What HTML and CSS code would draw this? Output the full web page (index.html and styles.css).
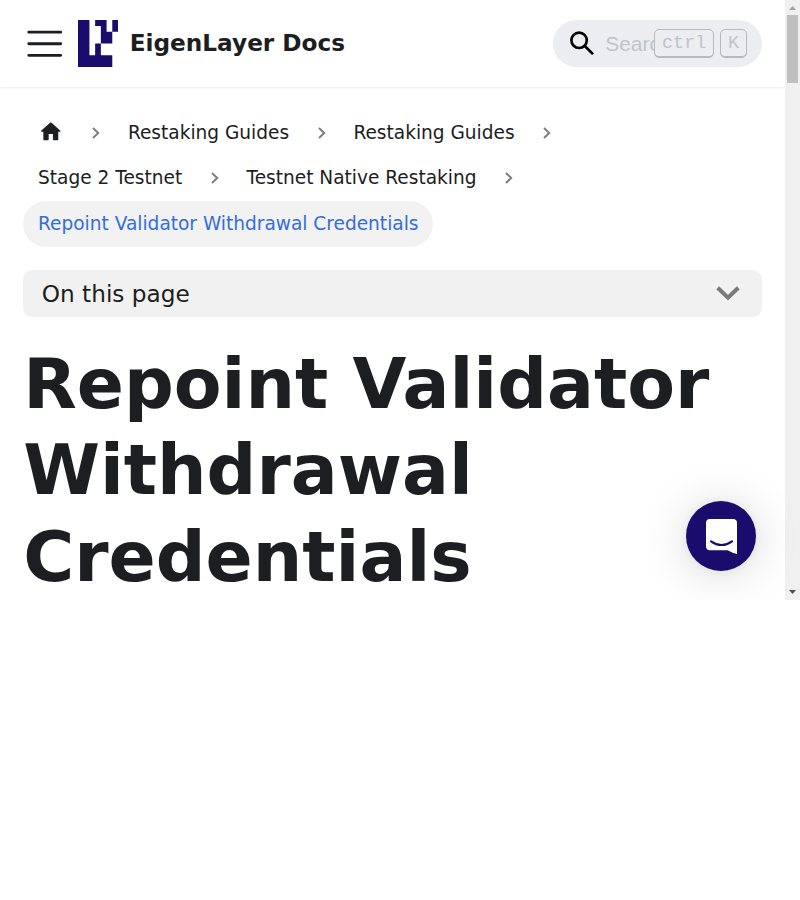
FILE: index.html
```
<!DOCTYPE html>
<html lang="en">
<head>
<meta charset="utf-8">
<title>Repoint Validator Withdrawal Credentials | EigenLayer Docs</title>
<link rel="stylesheet" href="styles.css">
</head>
<body>
<div class="viewport">
  <div class="page">
    <header class="navbar">
      <svg class="menu" viewBox="0 0 30 30"><path stroke="currentColor" stroke-linecap="round" stroke-miterlimit="10" stroke-width="2" d="M4 7h22M4 15h22M4 23h22"/></svg>
      <svg class="logo" viewBox="0 0 7 8" preserveAspectRatio="none"><path d="M0 0H2V6H3V4H4V1H3V0H5V2H6V0H7V2H6V4H4V6H6V8H0Z"/></svg>
      <b class="brand">EigenLayer Docs</b>
      <div class="search">
        <svg class="glass" viewBox="0 0 24 24"><circle cx="9.1" cy="9.3" r="7.7"/><path d="M14.8 15l8.2 8.1"/></svg>
        <span class="placeholder">Search</span>
        <div class="keys"><kbd>ctrl</kbd><kbd>K</kbd></div>
      </div>
    </header>
    <main>
      <nav class="crumbs">
        <div class="crumb-row">
          <a class="crumb home"><svg viewBox="0 0 24 24"><path d="M10 19v-5h4v5c0 .55.45 1 1 1h3c.55 0 1-.45 1-1v-7h1.700c.46 0 .68-.57.33-.87L12.670 3.600c-.38-.34-.96-.34-1.340 0l-8.360 7.530c-.34.3-.13.87.33.87H5v7c0 .55.45 1 1 1h3c.55 0 1-.45 1-1z"/></svg></a>
          <svg class="sep" viewBox="0 0 8 12"><path d="M1 1l5.200 5L1 11"/></svg>
          <a class="crumb">Restaking Guides</a>
          <svg class="sep" viewBox="0 0 8 12"><path d="M1 1l5.200 5L1 11"/></svg>
          <a class="crumb">Restaking Guides</a>
          <svg class="sep" viewBox="0 0 8 12"><path d="M1 1l5.200 5L1 11"/></svg>
        </div>
        <div class="crumb-row">
          <a class="crumb">Stage 2 Testnet</a>
          <svg class="sep" viewBox="0 0 8 12"><path d="M1 1l5.200 5L1 11"/></svg>
          <a class="crumb">Testnet Native Restaking</a>
          <svg class="sep" viewBox="0 0 8 12"><path d="M1 1l5.200 5L1 11"/></svg>
        </div>
        <div class="crumb-row"><span class="crumb active">Repoint Validator Withdrawal Credentials</span></div>
      </nav>
      <div class="toc"><span>On this page</span><svg viewBox="0 0 24 15"><path d="M1.700 1.800L12 11.800 22.300 1.800"/></svg></div>
      <h1>Repoint Validator Withdrawal Credentials</h1>
    </main>
  </div>
  <div class="scrollbar">
    <svg viewBox="0 0 7 4"><path fill="#a3a3a3" d="M0 4L3.500 0 7 4z"/></svg>
    <div class="thumb"></div>
    <svg class="down" viewBox="0 0 7 4"><path fill="#505050" d="M0 0h7L3.500 4z"/></svg>
  </div>
  <div class="chat"><svg viewBox="0 0 31 35"><path fill="#fff" d="M4 0h23a4 4 0 0 1 4 4v31s-4.500-.8-9.200-3.700H4a4 4 0 0 1-4-4V4a4 4 0 0 1 4-4z"/><path fill="none" stroke="#1a0c6d" stroke-width="2.200" stroke-linecap="round" d="M5 22.300q10.500 7.400 21 0"/></svg></div>
</div>
</body>
</html>
```
FILE: styles.css
```
* { box-sizing: border-box; }
body {
  margin: 0;
  background: #fff;
  color: #1c1e21;
  font-family: "DejaVu Sans", sans-serif;
  font-size: 23.2px;
}
svg { display: block; flex: none; }
.viewport {
  position: relative;
  display: flex;
  height: 600px;
  overflow: hidden;
}
.page { width: 785px; }
.navbar {
  display: flex;
  align-items: center;
  height: 87px;
  padding: 0 23px;
  box-shadow: 0 1px 2px rgba(0, 0, 0, .08);
}
.menu { width: 43.5px; height: 43.5px; }
.logo {
  width: 40px;
  height: 47px;
  margin: 0 11.7px 0 11.5px;
  fill: #1a0c6d;
}
.brand {
  padding-bottom: 2px;
  line-height: 38px;
  white-space: nowrap;
}
.search {
  display: flex;
  align-items: center;
  width: 209px;
  height: 47px;
  margin-left: auto;
  padding: 0 15px 0 17px;
  border-radius: 24px;
  background: #ebedf0;
}
.glass {
  width: 24px;
  height: 24px;
  margin-bottom: 1px;
  fill: none;
  stroke: #000;
  stroke-width: 2.7;
}
.placeholder {
  flex: 1;
  min-width: 0;
  margin-left: 11.3px;
  overflow: hidden;
  color: #bec3c9;
  font: 20.88px/30px "Liberation Sans", sans-serif;
}
.keys { display: flex; gap: 6px; }
kbd {
  height: 29px;
  padding: 0 6.8px;
  border: 1px solid #b4b9be;
  border-radius: 5px;
  box-shadow: inset 0 -1px 0 #b4b9be;
  color: #bec3c9;
  font: 18.56px/27px "Liberation Mono", monospace;
}
main { padding: 22.8px 23px 0 23.2px; }
.crumbs { font-size: 18.56px; }
.crumb-row { display: flex; align-items: center; height: 45.5px; }
.crumb {
  height: 45.5px;
  padding: 0 14.85px;
  border-radius: 24px;
  line-height: 45.5px;
  white-space: nowrap;
}
.home { width: 55.3px; }
.home svg {
  width: 25.6px;
  height: 25.6px;
  margin: 9.4px 0 0 .2px;
  fill: #1c1e21;
}
.sep {
  width: 8px;
  height: 12px;
  margin: .8px 12.7px 0 13.9px;
  fill: none;
  stroke: #7f7f7f;
  stroke-width: 2;
}
.active { height: 46px; background: #f2f2f2; color: #346de0; }
.toc {
  display: flex;
  align-items: center;
  justify-content: space-between;
  height: 47px;
  margin-top: 23.7px;
  padding: 0 22px 0 18.6px;
  border-radius: 9px;
  background: #f1f1f1;
}
.toc svg {
  width: 24px;
  height: 15px;
  margin-top: 1px;
  fill: none;
  stroke: #7a7a7a;
  stroke-width: 4;
}
h1 {
  margin: 23.8px 0 0;
  font-size: 69.6px;
  line-height: 86.4px;
}
.scrollbar {
  display: flex;
  flex-direction: column;
  align-items: center;
  width: 15px;
  height: 600px;
  padding: 6px 0;
  background: #f0f0f0;
}
.scrollbar svg { width: 7px; height: 4px; }
.thumb {
  width: 11px;
  height: 68px;
  margin-top: 5px;
  background: #bfbfbf;
}
.scrollbar .down { margin-top: auto; }
.chat {
  position: absolute;
  top: 501px;
  left: 686px;
  display: grid;
  place-items: center;
  width: 70px;
  height: 70px;
  border-radius: 50%;
  background: #1a0c6d;
  box-shadow: 0 1px 9px rgba(0, 0, 0, .06), 0 3px 47px rgba(0, 0, 0, .16);
}
.chat svg { width: 31px; height: 35px; }
```
